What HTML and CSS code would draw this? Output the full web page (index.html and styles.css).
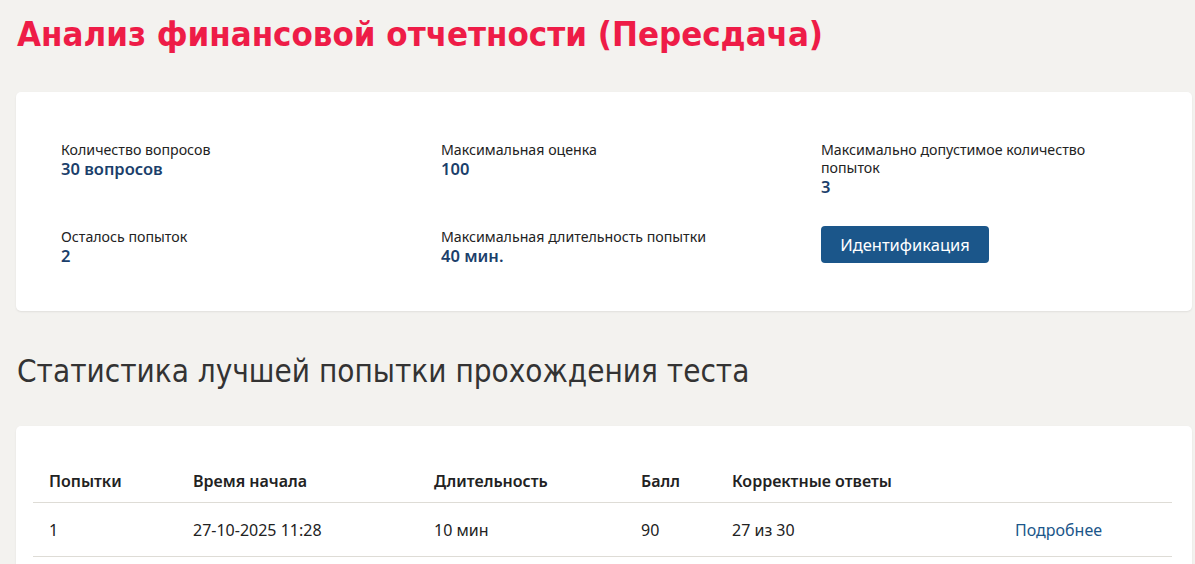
FILE: index.html
```html
<!DOCTYPE html>
<html lang="ru">
<head>
<meta charset="utf-8">
<link rel="stylesheet" href="styles.css">
</head>
<body>
<div class="page">
  <h1 class="title">Анализ финансовой отчетности (Пересдача)</h1>
  <div class="card info">
    <div class="grid">
      <div class="item">
        <div class="label">Количество вопросов</div>
        <div class="value">30 вопросов</div>
      </div>
      <div class="item">
        <div class="label">Максимальная оценка</div>
        <div class="value">100</div>
      </div>
      <div class="item">
        <div class="label narrow">Максимально допустимое количество попыток</div>
        <div class="value">3</div>
      </div>
      <div class="item">
        <div class="label">Осталось попыток</div>
        <div class="value">2</div>
      </div>
      <div class="item">
        <div class="label">Максимальная длительность попытки</div>
        <div class="value">40 мин.</div>
      </div>
      <div class="item">
        <button class="btn">Идентификация</button>
      </div>
    </div>
  </div>
  <h2 class="subtitle">Статистика лучшей попытки прохождения теста</h2>
  <div class="card stats">
    <table class="table">
      <colgroup>
        <col class="c1"><col class="c2"><col class="c3"><col class="c4"><col class="c5"><col class="c6">
      </colgroup>
      <thead>
        <tr><th>Попытки</th><th>Время начала</th><th>Длительность</th><th>Балл</th><th>Корректные ответы</th><th></th></tr>
      </thead>
      <tbody>
        <tr><td>1</td><td>27-10-2025 11:28</td><td>10 мин</td><td>90</td><td>27 из 30</td><td><a class="link" href="#">Подробнее</a></td></tr>
      </tbody>
    </table>
  </div>
</div>
</body>
</html>
```

FILE: styles.css
```css
html, body {
  margin: 0;
  padding: 0;
  background: #f3f2ef;
}
body {
  font-family: "Noto Sans", "Open Sans", sans-serif;
  color: #222;
}
.page {
  padding: 0 3px 0 16px;
}
.title {
  margin: 0;
  padding: 12px 0 0 1px;
  height: 80px;
  box-sizing: border-box;
  font-family: "DejaVu Sans Condensed", sans-serif;
  font-weight: 700;
  font-size: 34.5px;
  line-height: 44px;
  color: #ee1c47;
}
.card {
  background: #fff;
  border-radius: 5px;
  box-shadow: 0 1px 2px rgba(0,0,0,0.08);
}
.info {
  margin-top: 12px;
  padding: 49px 45px 40px;
  height: 219px;
  box-sizing: border-box;
}
.grid {
  display: grid;
  grid-template-columns: 380px 380px 1fr;
  row-gap: 31px;
}
.label {
  font-size: 14.2px;
  line-height: 18px;
  color: #222;
}
.label.narrow {
  max-width: 300px;
}
.value {
  font-size: 16.5px;
  font-weight: 600;
  line-height: 20px;
  color: #1b3f6b;
}
.btn {
  display: block;
  margin-top: -2px;
  background: #1b568a;
  color: #fff;
  border: none;
  border-radius: 4px;
  width: 168px;
  height: 37px;
  font-family: "Noto Sans", "Open Sans", sans-serif;
  font-size: 16.5px;
  padding: 0;
  cursor: pointer;
}
.subtitle {
  margin: 0;
  padding: 40px 0 0 1px;
  height: 115px;
  box-sizing: border-box;
  font-family: "DejaVu Sans Condensed", sans-serif;
  font-weight: 400;
  font-size: 31.2px;
  line-height: 40px;
  color: #333;
}
.stats {
  padding: 32px 20px 20px 17px;
}
.table {
  width: 100%;
  border-collapse: collapse;
}
.c1 { width: 144px; }
.c2 { width: 241px; }
.c3 { width: 207px; }
.c4 { width: 91px; }
.c5 { width: 283px; }
.table th, .table td {
  text-align: left;
  font-size: 16px;
  border-bottom: 1px solid #dedcd6;
}
.table th {
  font-weight: 600;
  padding: 12px 16px 10px;
  line-height: 22px;
  color: #222;
}
.table td {
  padding: 0 16px;
  height: 53px;
  color: #222;
}
.link {
  color: #1b568a;
  text-decoration: none;
}
```
